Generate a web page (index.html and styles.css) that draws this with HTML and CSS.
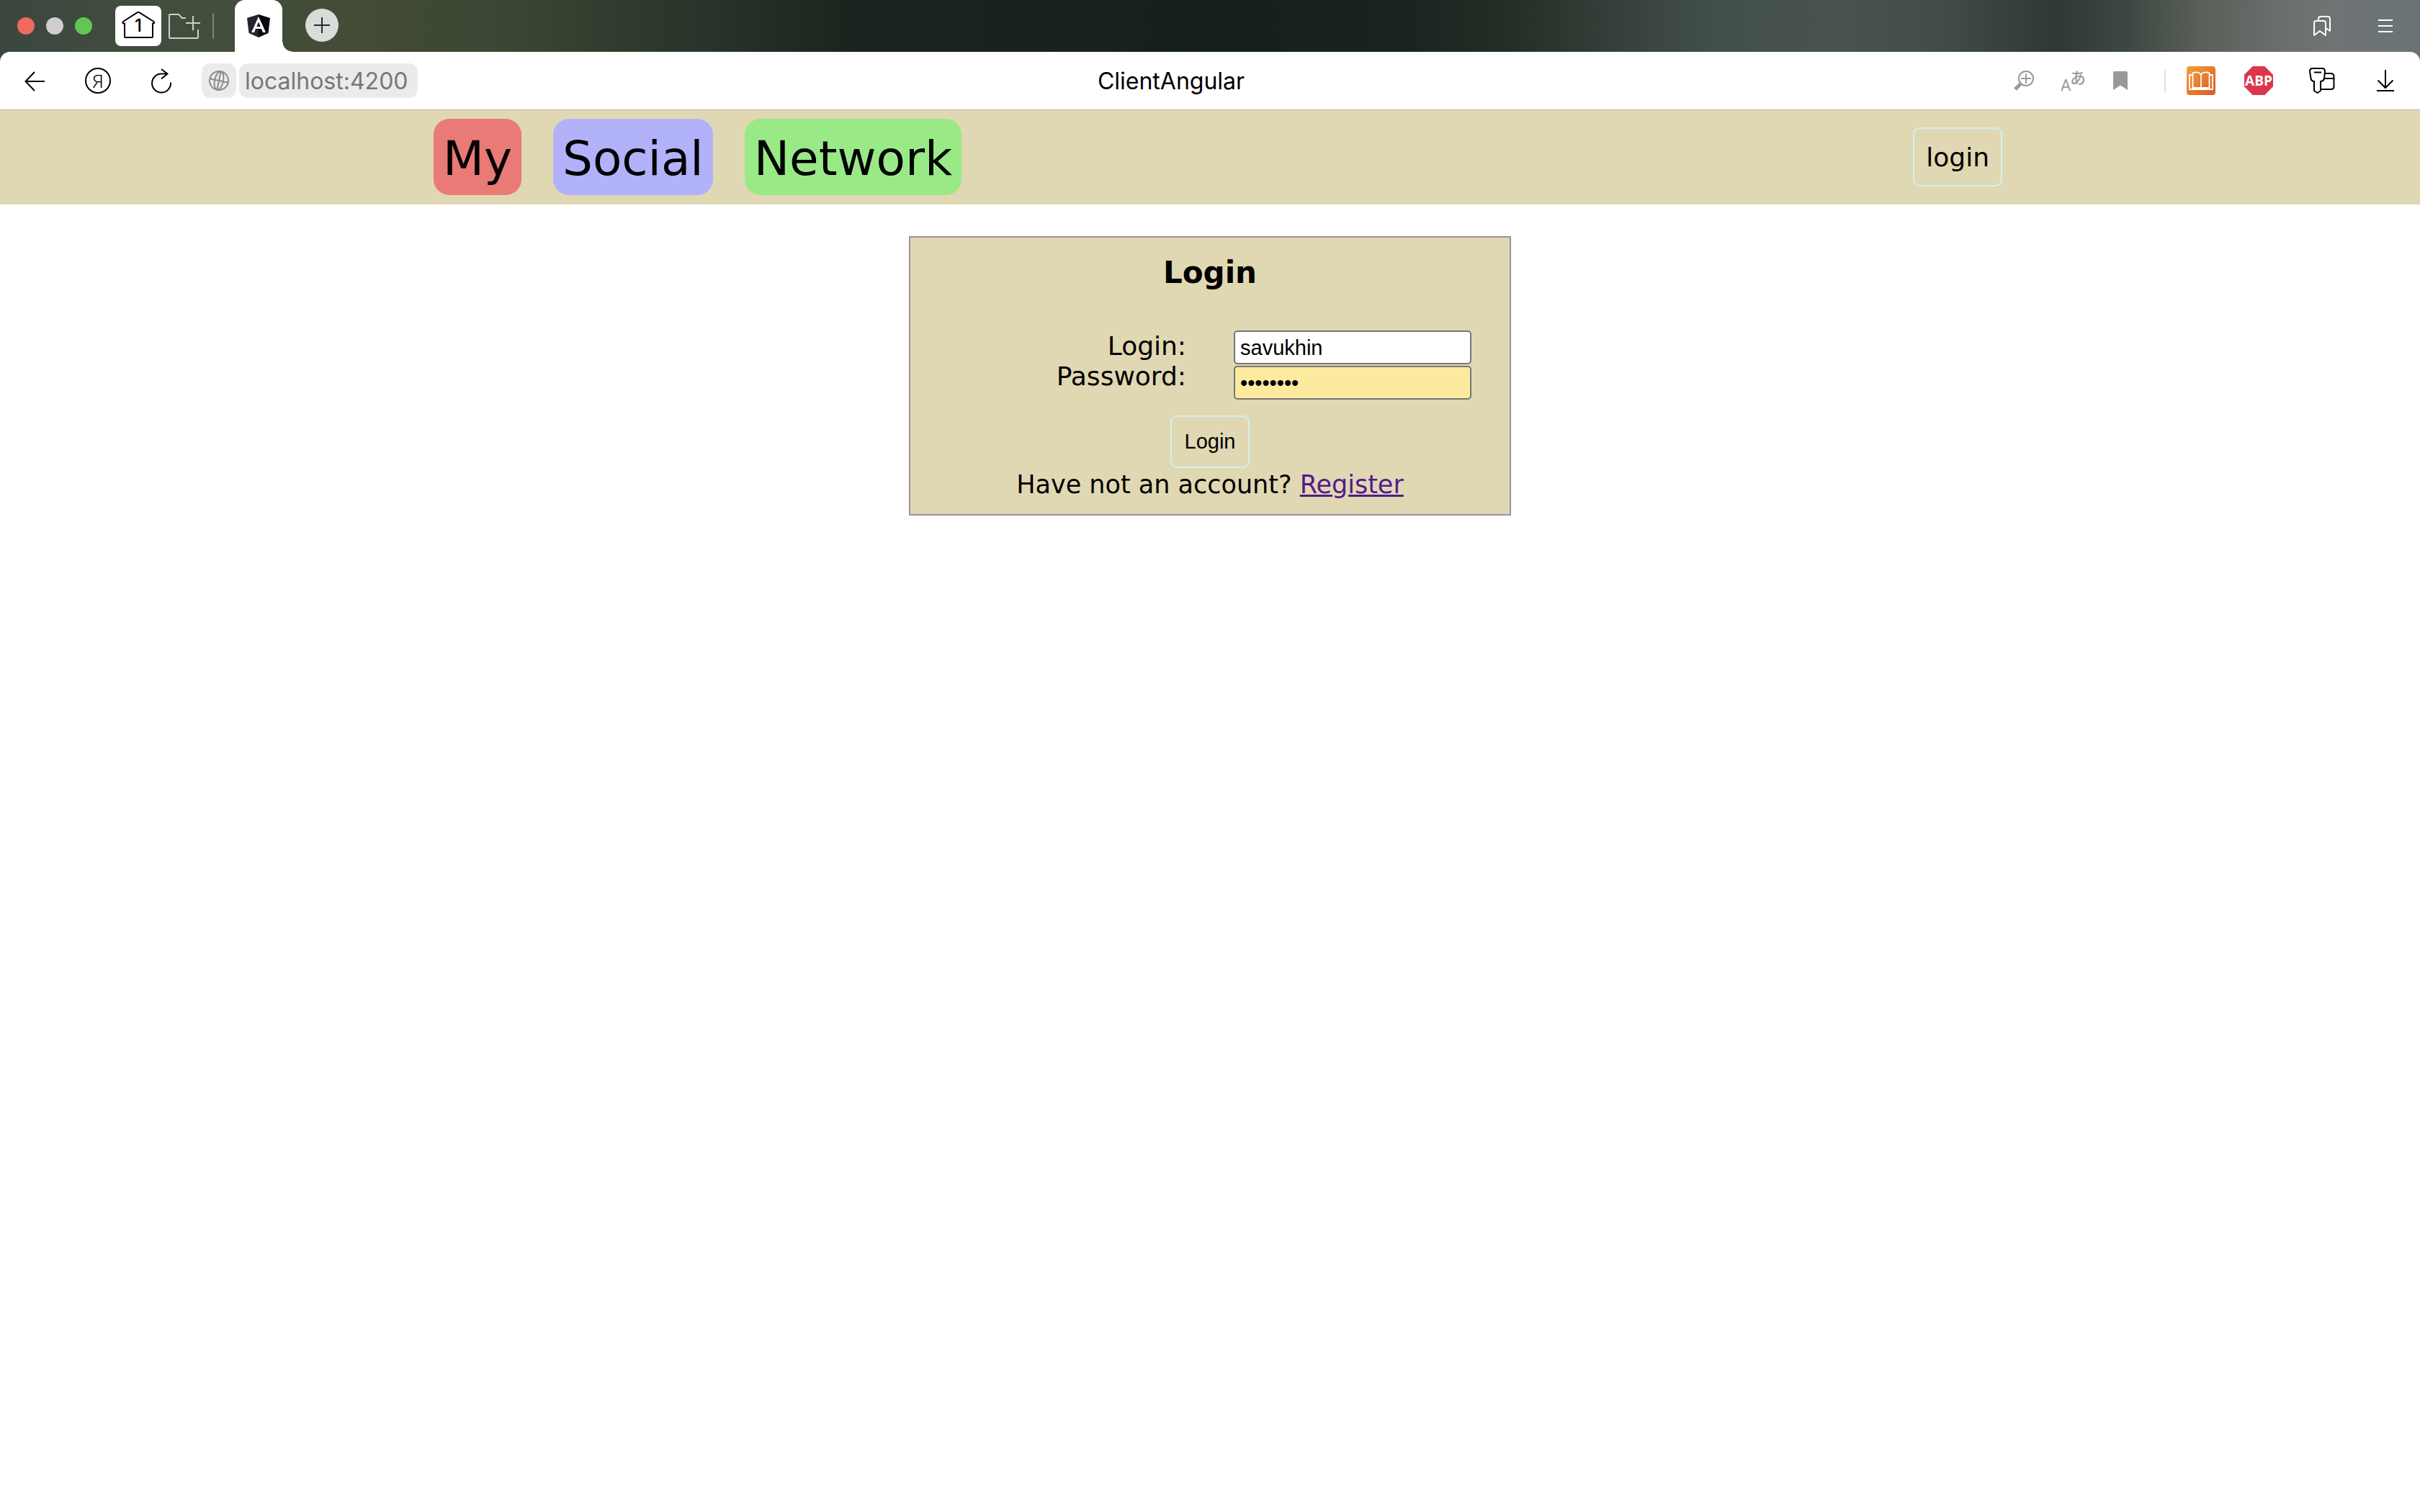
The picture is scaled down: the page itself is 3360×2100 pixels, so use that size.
FILE: index.html
```html
<!DOCTYPE html>
<html lang="en">
<head>
<meta charset="utf-8">
<title>ClientAngular</title>
<link rel="stylesheet" href="styles.css">
</head>
<body>
<div class="browser">
  <div class="tabbar">
    <div class="lights">
      <span class="light light-close"></span>
      <span class="light light-min"></span>
      <span class="light light-max"></span>
    </div>
    <button class="home" type="button" aria-label="Tab groups">
      <svg width="48" height="40" viewBox="0 0 48 40" fill="none" stroke="#000" stroke-width="2" stroke-linejoin="round" stroke-linecap="round">
        <path d="M5 16.500V35q0 1 1 1h37q1 0 1-1V16.500M5 16.500H3q-1.500-1.500 0-2.500L22.500 1.400q1.500-.8 3 0L45.500 14q1.500 1 0 2.500H44"/>
        <text class="home-count" x="24" y="28" text-anchor="middle">1</text>
      </svg>
    </button>
    <button class="folder" type="button" aria-label="New group">
      <svg width="44" height="36" viewBox="0 0 44 36" fill="none" stroke="#cdd0ca" stroke-width="2">
        <path d="M24 6H18.500L15 2q-.6-1-2-1H2Q1 1 1 2V33q0 1 1 1H40q1 0 1-1V22M24 13H44M34 3V23"/>
      </svg>
    </button>
    <span class="tab-divider"></span>
    <button class="tab" type="button" aria-label="ClientAngular">
      <svg width="32" height="32" viewBox="0 0 32 32">
        <path fill="#23252e" d="M16 0L0 5l2.500 21L16 32z"/>
        <path fill="#070812" d="M16 0L32 5l-2.500 21L16 32z"/>
        <path fill="#fff" fill-rule="evenodd" d="M16 3L6 25h4l2-5h8l2 5h4zM16 10.500L13.300 17h5.400z"/>
      </svg>
    </button>
    <button class="new-tab" type="button" aria-label="New tab">
      <svg width="22" height="22" viewBox="0 0 22 22" stroke="#1c2b30" stroke-width="2"><path d="M0 11H22M11 0V22"/></svg>
    </button>
    <div class="tabbar-end">
      <button class="icon" type="button" aria-label="Collections">
        <svg width="24" height="28" viewBox="0 0 24 28" fill="none" stroke="#fff" stroke-width="2" stroke-linejoin="round">
          <path d="M1 27V10q0-3 3-3h10q3 0 3 3v17l-8-6zM7 7V4q0-3 3-3h10q3 0 3 3v17l-6-4"/>
        </svg>
      </button>
      <button class="icon" type="button" aria-label="Menu">
        <svg width="20" height="20" viewBox="0 0 20 20" stroke="#fff" stroke-width="2"><path d="M0 2H20M0 10H20M0 18H20"/></svg>
      </button>
    </div>
  </div>

  <div class="toolbar">
    <div class="nav">
      <button class="icon" type="button" aria-label="Back">
        <svg width="28" height="28" viewBox="0 0 28 28" fill="none" stroke="#000" stroke-width="2"><path d="M14 2L1.500 15L14 28M1.500 15H28"/></svg>
      </button>
      <button class="icon" type="button" aria-label="Yandex">
        <svg width="36" height="36" viewBox="0 0 36 36" fill="none" stroke="#000" stroke-width="2">
          <circle cx="18" cy="18" r="17"/>
          <text class="ya" x="18" y="28" text-anchor="middle">Я</text>
        </svg>
      </button>
      <button class="icon" type="button" aria-label="Reload">
        <svg width="28" height="36" viewBox="0 0 28 36" fill="none" stroke="#000" stroke-width="2"><path d="M27 20.500A13 13 0 1 1 14 8.500H22M14 2L22.500 8.500L14 15.500"/></svg>
      </button>
    </div>
    <div class="address">
      <button class="icon site" type="button" aria-label="Site information">
        <svg width="28" height="28" viewBox="0 0 28 28" fill="none" stroke="#8c8c8c" stroke-width="2">
          <g transform="rotate(12 14 14)"><circle cx="14" cy="14" r="13"/><ellipse cx="14" cy="14" rx="6" ry="13"/><path d="M1 14H27M14 1V27"/></g>
        </svg>
      </button>
      <input class="url" type="text" value="localhost:4200" aria-label="Address">
    </div>
    <div class="page-title">ClientAngular</div>
    <div class="tools">
      <button class="icon" type="button" aria-label="Zoom">
        <svg width="28" height="28" viewBox="0 0 28 28" fill="none" stroke="#999" stroke-width="2">
          <circle cx="17" cy="11" r="10"/><path d="M10 11H24M17 4V18"/><path stroke-width="5" d="M9.500 18.500L2 26"/>
        </svg>
      </button>
      <button class="icon" type="button" aria-label="Translate">
        <svg width="48" height="48" viewBox="0 0 48 48" fill="#999">
          <text class="lat" x="8" y="38">A</text><text class="kana" x="21" y="28">あ</text>
        </svg>
      </button>
      <button class="icon" type="button" aria-label="Bookmark">
        <svg width="20" height="26" viewBox="0 0 20 26" fill="#999"><path d="M0 2Q0 0 2 0H18Q20 0 20 2V26L10 19.500L0 26z"/></svg>
      </button>
    </div>
    <span class="tool-divider"></span>
    <div class="extensions">
      <button class="ext" type="button" aria-label="Reader">
        <svg width="40" height="40" viewBox="0 0 40 40">
          <defs><linearGradient id="book" x1="0" y1="0" x2="1" y2="1"><stop offset="0" stop-color="#f3a03a"/><stop offset="1" stop-color="#de5726"/></linearGradient></defs>
          <rect width="40" height="40" rx="4" fill="url(#book)"/>
          <path fill="none" stroke="#fff" stroke-width="1.800" d="M20 11Q17 8 12 8.500L8.500 9.500V30H31.500V9.500L28 8.500Q23 8 20 11V30M8.500 12H4V32H36V12H31.500"/>
        </svg>
      </button>
      <button class="ext" type="button" aria-label="Adblock Plus">
        <svg width="40" height="40" viewBox="0 0 40 40">
          <path fill="#dc364c" d="M11.700 0H28.300L40 11.700V28.300L28.300 40H11.700L0 28.300V11.700z"/>
          <text class="abp" x="20" y="27" text-anchor="middle">ABP</text>
        </svg>
      </button>
    </div>
    <div class="tools-end">
      <button class="icon" type="button" aria-label="Passwords">
        <svg width="36" height="36" viewBox="0 0 36 36" fill="none" stroke="#000" stroke-width="2" stroke-linejoin="round">
          <path d="M21.500 8H30q4.500 0 4.500 4.500V26q0 4-4 4H16M21 15H34.500"/>
          <path fill="#fff" d="M5 1H18q4 0 4 4l-1 10q-.5 3-4 4h-1V32l-4.500 3L7 32V19H6q-3-1-3.500-4L1 5q0-4 4-4z"/>
          <path d="M7 6.500H17"/>
        </svg>
      </button>
      <button class="icon" type="button" aria-label="Downloads">
        <svg width="24" height="30" viewBox="0 0 24 30" fill="none" stroke="#000" stroke-width="2"><path d="M12 0V25M1.500 14.500L12 25L22.500 14.500M0 29H24"/></svg>
      </button>
    </div>
  </div>
</div>

<header class="site-header">
  <div class="container">
    <a class="chip chip-red" href="#">My</a>
    <a class="chip chip-blue" href="#">Social</a>
    <a class="chip chip-green" href="#">Network</a>
    <a class="login-link" href="#login">login</a>
  </div>
</header>

<main class="content">
  <form class="card" id="login">
    <h1 class="card-title">Login</h1>
    <div class="fields">
      <div class="labels">
        <label for="user">Login:</label>
        <label for="pass">Password:</label>
      </div>
      <div class="inputs">
        <input class="field" id="user" type="text" value="savukhin">
        <input class="field field-filled" id="pass" type="password" value="password">
      </div>
    </div>
    <button class="submit" type="button">Login</button>
    <p class="hint">Have not an account? <a class="register" href="#register">Register</a></p>
  </form>
</main>
</body>
</html>
```
FILE: styles.css
```css
* {
  box-sizing: border-box;
}

body {
  margin: 0;
  background: #fff;
  color: #000;
  font: 36px/42px "DejaVu Sans", sans-serif;
}

button {
  margin: 0;
  padding: 0;
  border: 0;
  background: none;
}

svg {
  display: block;
  overflow: visible;
}

/* Browser frame */
.browser {
  background: linear-gradient(90deg, #3b473f 0%, #434f3d 8%, #424c37 14%, #3b4634 21%, #29342a 29%, #1b241e 35%, #18211d 45%, #151f1c 51%, #1a241f 58%, #222d26 62%, #36413b 67%, #434f4a 71%, #48534f 76%, #424d48 80%, #303833 85%, #3e4842 88%, #5a605a 91%, #696d6b 94%, #6f7473 96%, #6b7378 100%);
}

.tabbar {
  display: flex;
  align-items: flex-start;
  height: 72px;
  padding: 0 24px;
}

.lights {
  display: flex;
  gap: 16px;
  padding-top: 24px;
}

.light {
  width: 24px;
  height: 24px;
  border-radius: 50%;
}

.light-close {
  background: #ee6a5f;
}

.light-min {
  background: #cfcdcd;
}

.light-max {
  background: #62c655;
}

.home {
  display: flex;
  align-items: center;
  justify-content: center;
  width: 64px;
  height: 56px;
  margin: 8px 0 0 32px;
  border-radius: 8px;
  background: #fff;
}

.home-count {
  font: 500 24px "Inter", sans-serif;
  fill: #000;
  stroke: none;
}

.folder {
  margin: 19px 0 0 10px;
}

.tab-divider {
  width: 2px;
  height: 36px;
  margin: 18px 0 0 17px;
  background: #7c8274;
}

.tab {
  position: relative;
  display: flex;
  align-items: center;
  justify-content: center;
  width: 66px;
  height: 72px;
  margin-left: 29px;
  border-radius: 14px 14px 0 0;
  background: #fff;
}

.tab::after {
  content: "";
  position: absolute;
  left: 100%;
  bottom: 0;
  width: 14px;
  height: 14px;
  background: radial-gradient(circle at 100% 0, transparent 13px, #fff 14px);
}

.new-tab {
  display: flex;
  align-items: center;
  justify-content: center;
  width: 46px;
  height: 46px;
  margin: 12px 0 0 32px;
  border-radius: 50%;
  background: #d9dcd8;
}

.tabbar-end {
  display: flex;
  gap: 40px;
  margin: 12px 0 0 auto;
}

.icon {
  display: flex;
  align-items: center;
  justify-content: center;
  width: 48px;
  height: 48px;
}

.toolbar {
  display: flex;
  align-items: center;
  height: 81px;
  padding: 0 24px;
  border-bottom: 1px solid #c0b995;
  border-radius: 14px 14px 0 0;
  background: #fff;
  font: 32px/48px "Inter", sans-serif;
}

.nav {
  display: flex;
  gap: 40px;
}

.ya {
  font: 300 26px "Noto Sans", sans-serif;
  fill: #000;
  stroke: none;
}

.address {
  display: flex;
  gap: 4px;
  margin-left: 32px;
}

.site {
  border-radius: 12px;
  background: #ebebeb;
}

.url {
  width: 248px;
  height: 48px;
  padding: 2px 8px 0;
  border: 0;
  border-radius: 12px;
  background: #ebebeb;
  color: #777;
  font: inherit;
}

.page-title {
  flex: 1;
  padding-top: 2px;
  text-align: center;
}

.tools {
  display: flex;
  gap: 19px;
  margin-left: 114px;
}

.lat {
  font: 22px "Roboto", sans-serif;
}

.kana {
  font: 500 22px "Noto Sans CJK JP", sans-serif;
}

.tool-divider {
  width: 2px;
  height: 32px;
  margin: 0 29px 0 37px;
  background: #e2e2e2;
}

.extensions {
  display: flex;
  gap: 40px;
}

.abp {
  font: 700 19px "Open Sans", sans-serif;
  fill: #fff;
}

.tools-end {
  display: flex;
  gap: 40px;
  margin-left: 44px;
}

/* Site header */
.site-header {
  background: #e0d8b3;
}

.container {
  display: flex;
  align-items: center;
  gap: 44px;
  max-width: 2200px;
  margin: 0 auto;
  padding: 12px 0 13px 22px;
}

.chip {
  padding: 6px 13px 0;
  border-radius: 22px;
  color: #000;
  font-size: 66px;
  line-height: 100px;
  text-decoration: none;
}

.chip-red {
  background: #e97a75;
}

.chip-blue {
  background: #b1b2f9;
}

.chip-green {
  background: #99ea87;
}

.login-link {
  margin-left: auto;
  padding: 19px 16px 17px;
  border: 2px solid #d4f0f0;
  border-radius: 9px;
  color: #000;
  text-decoration: none;
}

/* Login card */
.content {
  display: flex;
  justify-content: center;
  padding: 44px 22px;
}

.card {
  width: 836px;
  padding: 24px 0 20px;
  border: 2px solid #a28e9c;
  background: #e0d8b3;
  text-align: center;
}

.card-title {
  margin: 0 0 55px;
  font-size: 42px;
  line-height: 50px;
}

.fields {
  display: flex;
  gap: 66px;
}

.labels,
.inputs {
  display: flex;
  flex: 1;
  flex-direction: column;
}

.labels {
  align-items: flex-end;
  padding-top: 1px;
}

.inputs {
  align-items: flex-start;
  gap: 2px;
}

.field {
  width: 330px;
  height: 47px;
  padding: 3px 7px 1px;
  border: 2px solid #767676;
  border-radius: 5px;
  background: #fff;
  color: #000;
  font: 29px "Liberation Sans", sans-serif;
}

.field-filled {
  background: #fceb9f;
}

.submit {
  margin-top: 22px;
  padding: 18px;
  border: 2px solid #d4f0f0;
  border-radius: 9px;
  color: #000;
  font: 29px/33px "Liberation Sans", sans-serif;
}

.hint {
  margin: 0;
  padding-top: 2px;
  font-size: 35px;
}

.register {
  color: #551a8b;
}
```
